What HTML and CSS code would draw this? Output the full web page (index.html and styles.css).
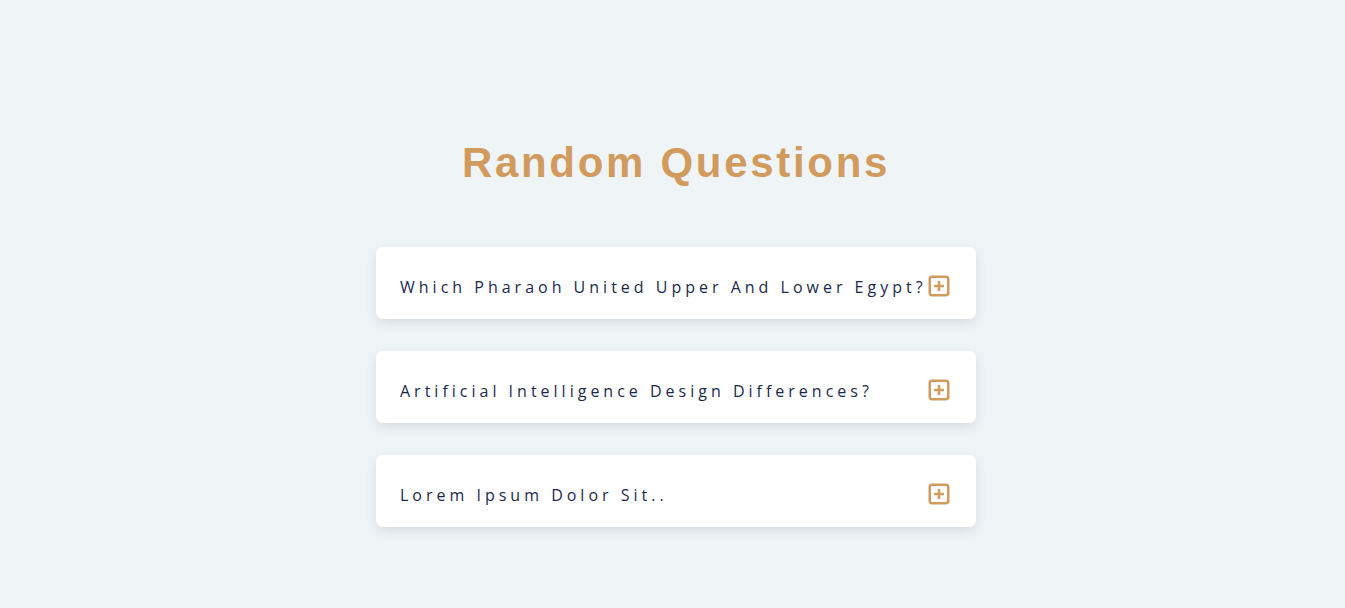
FILE: index.html
```html
<!DOCTYPE html>
<html lang="en">
<head>
<meta charset="utf-8">
<title>Random Questions</title>
<link rel="stylesheet" href="styles.css">
</head>
<body>
<main class="faq">
  <h1 class="faq-title">Random Questions</h1>
  <div class="faq-list">
    <div class="faq-item">
      <span class="faq-question">Which Pharaoh United Upper And Lower Egypt?</span>
      <svg class="faq-icon" viewBox="0 0 22 22" width="22" height="22" aria-hidden="true"><rect x="1.75" y="1.75" width="18.5" height="18.5" rx="2.5" fill="none" stroke="currentColor" stroke-width="2.5"/><path d="M11 6v10M6 11h10" stroke="currentColor" stroke-width="2.6" stroke-linecap="butt"/></svg>
    </div>
    <div class="faq-item">
      <span class="faq-question">Artificial Intelligence Design Differences?</span>
      <svg class="faq-icon" viewBox="0 0 22 22" width="22" height="22" aria-hidden="true"><rect x="1.75" y="1.75" width="18.5" height="18.5" rx="2.5" fill="none" stroke="currentColor" stroke-width="2.5"/><path d="M11 6v10M6 11h10" stroke="currentColor" stroke-width="2.6" stroke-linecap="butt"/></svg>
    </div>
    <div class="faq-item">
      <span class="faq-question">Lorem Ipsum Dolor Sit..</span>
      <svg class="faq-icon" viewBox="0 0 22 22" width="22" height="22" aria-hidden="true"><rect x="1.75" y="1.75" width="18.5" height="18.5" rx="2.5" fill="none" stroke="currentColor" stroke-width="2.5"/><path d="M11 6v10M6 11h10" stroke="currentColor" stroke-width="2.6" stroke-linecap="butt"/></svg>
    </div>
  </div>
</main>
</body>
</html>
```

FILE: styles.css
```css
* { box-sizing: border-box; }
html, body { margin: 0; padding: 0; }
body {
  background: #eff4f7;
  font-family: "Open Sans", sans-serif;
  min-height: 608px;
}
.faq {
  display: flex;
  flex-direction: column;
  align-items: center;
  padding-top: 139px;
  padding-left: 7px;
}
.faq-title {
  margin: 0 0 60px;
  font-family: "Liberation Sans", Arial, sans-serif;
  font-weight: 700;
  font-size: 42px;
  line-height: 48px;
  letter-spacing: 2.7px;
  color: #d19b5e;
}
.faq-list {
  display: flex;
  flex-direction: column;
  gap: 32px;
  width: 600px;
}
.faq-item {
  display: flex;
  align-items: center;
  justify-content: space-between;
  height: 72px;
  padding: 8px 26px 0 24px;
  background: #ffffff;
  border-radius: 7px;
  box-shadow: 0 4px 12px rgba(40, 60, 80, 0.12);
}
.faq-question {
  font-size: 16px;
  letter-spacing: 4px;
  white-space: nowrap;
  color: #1b2a4c;
}
.faq-icon {
  color: #d19b5e;
  flex-shrink: 0;
  margin-top: -3px;
}
```
